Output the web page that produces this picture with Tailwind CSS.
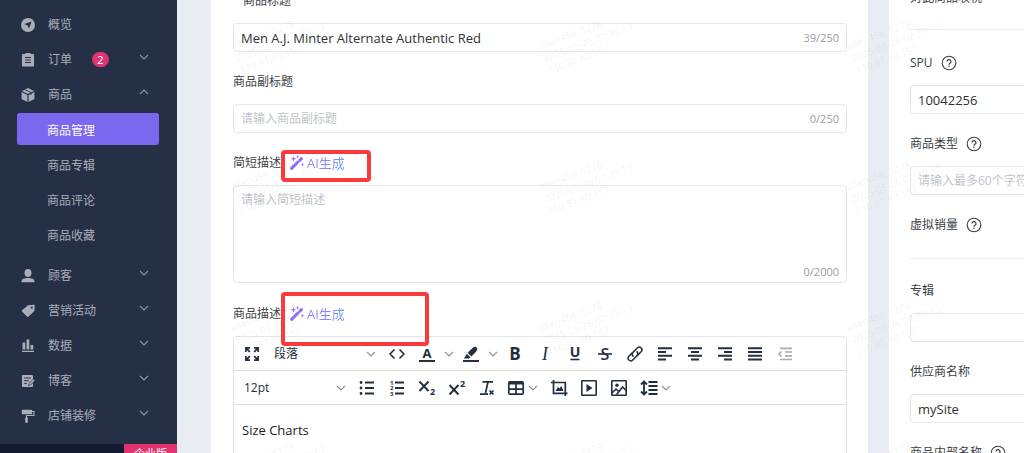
<!DOCTYPE html>
<html lang="zh-CN">
<head>
<meta charset="UTF-8">
<meta name="viewport" content="width=device-width, initial-scale=1.0">
<title>商品管理</title>
<script src="https://cdn.jsdelivr.net/npm/@tailwindcss/browser@4"></script>
</head>
<body class="flex h-screen overflow-hidden bg-[#e9edf3] font-['Open_Sans','Noto_Sans_CJK_SC',sans-serif] text-[12px] leading-5 text-[#3c3f44]">

<!-- icons -->
<svg class="hidden">
  <symbol id="down" viewBox="0 0 10 10"><path d="M1 3l4 4 4-4" fill="none" stroke="currentColor" stroke-width="1.1"/></symbol>
  <symbol id="up" viewBox="0 0 10 10"><path d="M1 7l4-4 4 4" fill="none" stroke="currentColor" stroke-width="1.1"/></symbol>
  <symbol id="help" viewBox="0 0 16 16"><circle cx="8" cy="8" r="6.8" fill="none" stroke="currentColor" stroke-width="1.1"/><path d="M6 6.6a2 2 0 1 1 3 1.7c-.7.4-1 .7-1 1.4" fill="none" stroke="currentColor" stroke-width="1.2"/><circle cx="8" cy="11.3" r=".8" fill="currentColor"/></symbol>
  <symbol id="wand" viewBox="0 0 16 16"><path d="M2.6 13.4L9 7" stroke="#8f6bfa" stroke-width="3" stroke-linecap="round"/><path d="M10.8 5.200l1.600-1.600" stroke="#8f6bfa" stroke-width="3" stroke-linecap="round"/><path d="M4.500.8l.8 2.200 2.200.8-2.200.8-.8 2.200-.8-2.200-2.200-.8 2.200-.8z" fill="#a07bfa"/><path d="M8.600 0l.5 1.200 1.200.5-1.200.5-.5 1.200-.5-1.200-1.200-.5 1.200-.5z" fill="#8f6bfa"/><path d="M13.400 8l.5 1.300 1.300.5-1.300.5-.5 1.300-.5-1.300-1.300-.5 1.300-.5z" fill="#8f6bfa"/></symbol>
</svg>

<!-- sidebar -->
<aside class="flex w-[177px] shrink-0 flex-col overflow-hidden bg-[#253047] text-[#a9aeb8]">
  <nav class="flex-1 overflow-hidden pt-[7px]">
    <a href="#" class="flex h-[35px] items-center pl-[21px] pr-7">
      <svg class="size-[14px]" viewBox="0 0 14 14"><circle cx="7" cy="7" r="7" fill="currentColor"/><path d="M10.600 3.400L8 10.600 6.600 7.400 3.400 6z" fill="#253047"/></svg>
      <span class="ml-[13px]">概览</span>
    </a>
    <a href="#" class="flex h-[35px] items-center pl-[21px] pr-7">
      <svg class="size-[14px]" viewBox="0 0 14 14"><path d="M2 1h2.500V0h5v1H12a1 1 0 0 1 1 1v10.500a1 1 0 0 1-1 1H2a1 1 0 0 1-1-1V2a1 1 0 0 1 1-1z" fill="currentColor"/><path d="M4 4.500h6M4 7h6M4 9.500h6" stroke="#253047"/></svg>
      <span class="ml-[13px]">订单</span>
      <span class="ml-5 flex h-[15px] w-[17px] items-center justify-center rounded-full bg-[#e0336f] text-[11px] leading-none text-white">2</span>
      <svg class="mb-1.5 ml-auto size-[10px] text-[#8f96a3]"><use href="#down"/></svg>
    </a>
    <a href="#" class="flex h-[35px] items-center pl-[21px] pr-7">
      <svg class="size-[14px]" viewBox="0 0 14 14"><path d="M7 0l6 3-6 3-6-3zM.6 4l5.800 2.900V14L.6 11zM13.400 4L7.600 6.900V14l5.800-3z" fill="currentColor"/><path d="M3.800 1.500l6.200 3V7" fill="none" stroke="#253047" stroke-width=".9"/></svg>
      <span class="ml-[13px]">商品</span>
      <svg class="mb-1.5 ml-auto size-[10px] text-[#8f96a3]"><use href="#up"/></svg>
    </a>
    <div class="flex flex-col gap-[3px] px-[17px] pb-2 pt-px">
      <a href="#" class="mr-px h-8 rounded-[3px] bg-[#7b68ee] pl-[30px] pt-2 text-white">商品管理</a>
      <a href="#" class="h-8 pl-[30px] pt-2">商品专辑</a>
      <a href="#" class="h-8 pl-[30px] pt-2">商品评论</a>
      <a href="#" class="h-8 pl-[30px] pt-2">商品收藏</a>
    </div>
    <a href="#" class="flex h-[35px] items-center pl-[21px] pr-7">
      <svg class="size-[14px]" viewBox="0 0 14 14"><ellipse cx="7" cy="4" rx="3.500" ry="4" fill="currentColor"/><path d="M.5 12.500C.5 10 3 9 7 9s6.500 1 6.500 3.500q0 .8-.8.8H1.300q-.8 0-.8-.8z" fill="currentColor"/></svg>
      <span class="ml-[13px]">顾客</span>
      <svg class="mb-1.5 ml-auto size-[10px] text-[#8f96a3]"><use href="#down"/></svg>
    </a>
    <a href="#" class="flex h-[35px] items-center pl-[21px] pr-7">
      <svg class="size-[14px]" viewBox="0 0 14 14"><path d="M7 1.200L13 .8q.8 0 .8.8L13.400 7 7.600 12.600q-.8.8-1.600 0L1 7.600q-.8-.8 0-1.400z" fill="currentColor"/><circle cx="10.800" cy="3.600" r="1.100" fill="#253047"/></svg>
      <span class="ml-[13px]">营销活动</span>
      <svg class="mb-1.5 ml-auto size-[10px] text-[#8f96a3]"><use href="#down"/></svg>
    </a>
    <a href="#" class="flex h-[35px] items-center pl-[21px] pr-7">
      <svg class="size-[14px]" viewBox="0 0 14 14"><path d="M1.500 3.500h2.800v7H1.500zM5.500.5h2.800v10H5.500zM9.500 6h2.800v4.500H9.500zM1 11.700h12V13H1z" fill="currentColor"/></svg>
      <span class="ml-[13px]">数据</span>
      <svg class="mb-1.5 ml-auto size-[10px] text-[#8f96a3]"><use href="#down"/></svg>
    </a>
    <a href="#" class="flex h-[35px] items-center pl-[21px] pr-7">
      <svg class="size-[14px]" viewBox="0 0 14 14"><path d="M2 1h9a1 1 0 0 1 1 1v10a1 1 0 0 1-1 1H2a1 1 0 0 1-1-1V2a1 1 0 0 1 1-1z" fill="currentColor"/><path d="M3.200 4h6.600M3.200 6.700h4.600M3.200 9.400h2.600" stroke="#253047"/><path d="M7.500 11.500l.4-2L12.500 5l1.500 1.500-4.500 4.600z" fill="currentColor" stroke="#253047" stroke-width=".7"/></svg>
      <span class="ml-[13px]">博客</span>
      <svg class="mb-1.5 ml-auto size-[10px] text-[#8f96a3]"><use href="#down"/></svg>
    </a>
    <a href="#" class="flex h-[35px] items-center pl-[21px] pr-7">
      <svg class="size-[14px]" viewBox="0 0 14 14"><path d="M1.500.8h9a.7.7 0 0 1 .7.7v3a.7.7 0 0 1-.7.7h-9a.7.7 0 0 1-.7-.7v-3a.7.7 0 0 1 .7-.7zM4.200 8.500h2.600v4.200a1.300 1.300 0 0 1-2.600 0z" fill="currentColor"/><path d="M11 2.500h2v4H5.500v2.500" fill="none" stroke="currentColor" stroke-width="1.100"/></svg>
      <span class="ml-[13px]">店铺装修</span>
      <svg class="mb-1.5 ml-auto size-[10px] text-[#8f96a3]"><use href="#down"/></svg>
    </a>
  </nav>
  <div class="flex h-[9px] shrink-0 justify-end bg-[#141b30]">
    <span class="w-[53px] bg-[#e0336f] text-center text-[11px] leading-5 text-white">企业版</span>
  </div>
</aside>

<!-- product form -->
<main class="ml-[34px] flex-1 bg-white px-[22px] pr-[21px]">
  <form class="-mt-[9px] flex flex-col gap-5">
    <div class="flex flex-col gap-3">
      <label for="title" class="pl-[10px]">商品标题</label>
      <div class="flex h-[29px] items-center rounded-[4px] border border-[#e4e6ef] px-[7px]">
        <input id="title" type="text" value="Men A.J. Minter Alternate Authentic Red" class="min-w-0 flex-1 text-[13px] text-[#303133] outline-none">
        <span class="text-[11px] text-[#9a9da3]">39/250</span>
      </div>
    </div>
    <div class="flex flex-col gap-3">
      <label for="subtitle">商品副标题</label>
      <div class="flex h-[29px] items-center rounded-[4px] border border-[#e4e6ef] px-[7px]">
        <input id="subtitle" type="text" placeholder="请输入商品副标题" class="min-w-0 flex-1 outline-none placeholder:text-[#c0c4cc]">
        <span class="text-[11px] text-[#9a9da3]">0/250</span>
      </div>
    </div>
    <div class="flex flex-col gap-3">
      <div class="relative flex h-5 items-center">
        <label for="brief">简短描述</label>
        <button type="button" class="ml-2 flex items-center gap-0.5"><svg class="size-4"><use href="#wand"/></svg><span class="bg-linear-to-r from-[#9a7bfa] to-[#6a9bfa] bg-clip-text text-[13px] text-transparent">AI生成</span></button>
        <span class="absolute -top-[3px] left-[48px] h-[32px] w-[90px] rounded-[4px] border-4 border-[#fb3b3b]"></span>
      </div>
      <div class="flex h-[98px] flex-col rounded-[4px] border border-[#e4e6ef] px-[7px] pt-1">
        <textarea id="brief" placeholder="请输入简短描述" class="flex-1 resize-none outline-none placeholder:text-[#c0c4cc]"></textarea>
        <span class="self-end text-[11px] text-[#9a9da3]">0/2000</span>
      </div>
    </div>
    <div class="flex flex-col gap-3">
      <div class="relative flex h-[21px] items-center">
        <label for="block">商品描述</label>
        <button type="button" class="ml-2 flex items-center gap-0.5"><svg class="size-4"><use href="#wand"/></svg><span class="bg-linear-to-r from-[#9a7bfa] to-[#6a9bfa] bg-clip-text text-[13px] text-transparent">AI生成</span></button>
        <span class="absolute -top-[11px] left-[48px] z-10 h-[54px] w-[148px] rounded-[4px] border-4 border-[#fb3b3b]"></span>
      </div>
      <div class="rounded-t-[4px] border border-[#e4e6ef] text-[#222f3e]">
        <div class="flex h-[34px] items-center border-b border-[#dcdcd8] pl-[3px] font-['Open_Sans']">
          <button type="button" aria-label="全屏" class="flex w-[30px] justify-center"><svg class="size-6" viewBox="0 0 24 24" fill="currentColor"><path d="M5 5h5v1.700H8l2.500 2.500-1.300 1.300L6.700 8v2H5zM19 5v5h-1.700V8l-2.500 2.500-1.300-1.300L16 6.700h-2V5zM5 19v-5h1.700v2l2.500-2.500 1.300 1.300L8 17.300h2V19zM19 19h-5v-1.700h2l-2.500-2.500 1.300-1.300 2.500 2.500v-2H19z"/></svg></button>
          <div class="relative w-[115px]">
            <select id="block" class="w-full appearance-none pl-[7px] font-['Open_Sans','Noto_Sans_CJK_SC',sans-serif] outline-none"><option>段落</option></select>
            <svg class="pointer-events-none absolute right-[6px] top-[5px] size-[10px] text-[#8b929b]"><use href="#down"/></svg>
          </div>
          <button type="button" aria-label="源代码" class="flex w-[30px] justify-center"><svg class="size-6" viewBox="0 0 24 24" fill="none" stroke="currentColor" stroke-width="1.700" stroke-linecap="round" stroke-linejoin="round"><path d="M9 8l-4 4 4 4M15 8l4 4-4 4"/></svg></button>
          <button type="button" aria-label="文字颜色" class="flex w-[30px] justify-center"><svg class="size-6" viewBox="0 0 24 24" fill="currentColor"><text x="12" y="16" text-anchor="middle" font-size="13" font-weight="700">A</text><path d="M4 18h16v2H4z"/></svg></button>
          <button type="button" aria-label="选择文字颜色" class="flex w-[14px] justify-center text-[#8b929b]"><svg class="size-[10px]"><use href="#down"/></svg></button>
          <button type="button" aria-label="背景颜色" class="flex w-[30px] justify-center"><svg class="size-6" viewBox="0 0 24 24" fill="currentColor"><path d="M4 18h16v2H4zM5 16.500l2.800-4.800 3.800 3.800-1.800 1zM8.600 10.800l5-4.800q2.500-2 4-.6t-.4 4l-4.800 5z"/></svg></button>
          <button type="button" aria-label="选择背景颜色" class="flex w-[14px] justify-center text-[#8b929b]"><svg class="size-[10px]"><use href="#down"/></svg></button>
          <button type="button" aria-label="粗体" class="flex w-[30px] justify-center"><svg class="size-6" viewBox="0 0 24 24" fill="currentColor"><text x="12" y="18" text-anchor="middle" font-size="17" font-weight="700">B</text></svg></button>
          <button type="button" aria-label="斜体" class="flex w-[30px] justify-center"><svg class="size-6" viewBox="0 0 24 24" fill="currentColor"><text x="12" y="18" text-anchor="middle" font-size="18" font-style="italic" class="font-['Liberation_Serif']">I</text></svg></button>
          <button type="button" aria-label="下划线" class="flex w-[30px] justify-center"><svg class="size-6" viewBox="0 0 24 24" fill="currentColor"><text x="12" y="15" text-anchor="middle" font-size="14" font-weight="700">U</text><path d="M7.500 16.700h9v1.600h-9z"/></svg></button>
          <button type="button" aria-label="删除线" class="flex w-[30px] justify-center"><svg class="size-6" viewBox="0 0 24 24" fill="currentColor"><text x="12" y="17.500" text-anchor="middle" font-size="16" font-weight="600">S</text><path d="M5 11.200h14v1.600H5z"/></svg></button>
          <button type="button" aria-label="链接" class="flex w-[30px] justify-center"><svg class="size-6" viewBox="0 0 24 24" fill="none" stroke="currentColor" stroke-width="1.500" stroke-linecap="round"><path d="M10 14.300a3 3 0 0 1 .2-4.200l4.300-4.300a2.700 2.700 0 0 1 3.800 3.800l-3 3"/><path d="M14 9.700a3 3 0 0 1-.2 4.200l-4.300 4.300a2.700 2.700 0 0 1-3.800-3.800l3-3"/></svg></button>
          <button type="button" aria-label="左对齐" class="flex w-[30px] justify-center"><svg class="size-6" viewBox="0 0 24 24" fill="none" stroke="currentColor" stroke-width="1.900"><path d="M5 6.300h14M5 10h8M5 13.800h14M5 17.500h8"/></svg></button>
          <button type="button" aria-label="居中" class="flex w-[30px] justify-center"><svg class="size-6" viewBox="0 0 24 24" fill="none" stroke="currentColor" stroke-width="1.900"><path d="M5 6.300h14M8 10h8M5 13.800h14M8 17.500h8"/></svg></button>
          <button type="button" aria-label="右对齐" class="flex w-[30px] justify-center"><svg class="size-6" viewBox="0 0 24 24" fill="none" stroke="currentColor" stroke-width="1.900"><path d="M5 6.300h14M11 10h8M5 13.800h14M11 17.500h8"/></svg></button>
          <button type="button" aria-label="两端对齐" class="flex w-[30px] justify-center"><svg class="size-6" viewBox="0 0 24 24" fill="none" stroke="currentColor" stroke-width="1.900"><path d="M5 6.300h14M5 10h14M5 13.800h14M5 17.500h14"/></svg></button>
          <button type="button" aria-label="减少缩进" disabled class="flex w-[30px] justify-center text-[#a7acb2]"><svg class="size-6" viewBox="0 0 24 24" fill="none" stroke="currentColor" stroke-width="1.700"><path d="M7 6.300h12M12 10h7M12 13.800h7M7 17.500h12M8.500 9.500L6 12l2.500 2.500"/></svg></button>
        </div>
        <div class="flex h-[34px] items-center border-b border-[#dcdcd8] pl-[3px] font-['Open_Sans']">
          <div class="relative w-[115px]">
            <select aria-label="字号" class="w-full appearance-none pl-[7px] outline-none"><option>12pt</option></select>
            <svg class="pointer-events-none absolute right-[6px] top-[5px] size-[10px] text-[#8b929b]"><use href="#down"/></svg>
          </div>
          <button type="button" aria-label="项目符号" class="flex w-[30px] justify-center"><svg class="size-6" viewBox="0 0 24 24" fill="none" stroke="currentColor" stroke-width="1.800"><path d="M10 6.500h9M10 12h9M10 17.500h9"/><path d="M6 6.500h.01M6 12h.01M6 17.500h.01" stroke-width="2.800" stroke-linecap="round"/></svg></button>
          <button type="button" aria-label="编号" class="flex w-[30px] justify-center"><svg class="size-6" viewBox="0 0 24 24" fill="currentColor"><path d="M10 6.500h9M10 12h9M10 17.500h9" stroke="currentColor" stroke-width="1.800"/><text font-size="6" font-weight="700"><tspan x="5" y="8.500">1</tspan><tspan x="5" y="14">2</tspan><tspan x="5" y="19.500">3</tspan></text></svg></button>
          <button type="button" aria-label="下标" class="flex w-[30px] justify-center"><svg class="size-6" viewBox="0 0 24 24" fill="currentColor"><path d="M4.500 5.500l9 9.500M13.500 5.500l-9 9.500" stroke="currentColor" stroke-width="1.900"/><text x="15" y="19" font-size="9" font-weight="700">2</text></svg></button>
          <button type="button" aria-label="上标" class="flex w-[30px] justify-center"><svg class="size-6" viewBox="0 0 24 24" fill="currentColor"><path d="M4.500 9l9 9.500M13.500 9l-9 9.500" stroke="currentColor" stroke-width="1.900"/><text x="15" y="11" font-size="9" font-weight="700">2</text></svg></button>
          <button type="button" aria-label="清除格式" class="flex w-[30px] justify-center"><svg class="size-6" viewBox="0 0 24 24" fill="none" stroke="currentColor" stroke-width="1.700"><path d="M7.500 5.800h10.500M13 6l-2.500 11M5 18.200h8M14.500 14.500l4 4M18.500 14.500l-4 4"/></svg></button>
          <button type="button" aria-label="表格" class="flex w-[42px] items-center pl-0.5"><svg class="size-6" viewBox="0 0 24 24" fill="none" stroke="currentColor" stroke-width="1.700"><rect x="4.800" y="5.800" width="14.400" height="12.400" rx="1.200"/><path d="M5 7h14" stroke-width="3"/><path d="M5 13.200h14M12 8v10"/></svg><svg class="size-[10px] text-[#8b929b]"><use href="#down"/></svg></button>
          <button type="button" aria-label="图片上传" class="flex w-[30px] justify-center"><svg class="size-6" viewBox="0 0 24 24" fill="none" stroke="currentColor" stroke-width="1.700"><path d="M4 6.500h14.300V20M6.500 4v13.300H20.500"/><path d="M8.500 15l2.500-4 1.500 1.500 1.700-2.500 2.300 5z" fill="currentColor" stroke="none"/></svg></button>
          <button type="button" aria-label="视频" class="flex w-[30px] justify-center"><svg class="size-6" viewBox="0 0 24 24" fill="none" stroke="currentColor" stroke-width="1.600"><rect x="4.800" y="4.800" width="14.400" height="14.400" rx=".5"/><path d="M9.500 8v8l6-4z" fill="currentColor" stroke="none"/></svg></button>
          <button type="button" aria-label="图片" class="flex w-[30px] justify-center"><svg class="size-6" viewBox="0 0 24 24" fill="none" stroke="currentColor" stroke-width="1.600"><rect x="4.800" y="4.800" width="14.400" height="14.400" rx=".5"/><path d="M5 17l4-4 3 2.500 3.500-4.500 3.500 3.500M9.500 18.500l3-3.500"/><circle cx="10" cy="9.300" r="1.700" fill="currentColor" stroke="none"/></svg></button>
          <button type="button" aria-label="行高" class="flex w-[42px] items-center pl-[3px]"><svg class="size-6" viewBox="0 0 24 24" fill="none" stroke="currentColor" stroke-width="1.800"><path d="M11.500 6h9M11.500 10h9M11.500 14h9M11.500 18h9M7 6v12M4 8.500l3-3 3 3M4 15.500l3 3 3-3"/></svg><svg class="size-[10px] text-[#8b929b]"><use href="#down"/></svg></button>
        </div>
        <div class="min-h-40 px-2 pt-[15px] text-[13px] text-[#1b1b1b]"><p>Size Charts</p></div>
      </div>
    </div>
  </form>
</main>

<!-- side panel -->
<section class="ml-[21px] w-[135px] shrink-0 overflow-hidden bg-white pl-[21px]">
  <form class="-mt-[12px] w-[260px]">
    <p>对此商品收税</p>
    <hr class="mt-[21px] border-[#ebedf2]">
    <div class="mt-[23px] flex flex-col gap-5">
      <div class="flex flex-col gap-3">
        <label for="spu" class="flex items-center gap-2">SPU <svg class="size-4"><use href="#help"/></svg></label>
        <input id="spu" type="text" value="10042256" class="h-[29px] rounded-[4px] border border-[#e4e6ef] px-[7px] text-[13px] text-[#303133] outline-none">
      </div>
      <div class="flex flex-col gap-3">
        <label for="type" class="flex items-center gap-2">商品类型 <svg class="size-4"><use href="#help"/></svg></label>
        <input id="type" type="text" placeholder="请输入最多60个字符" class="h-[29px] rounded-[4px] border border-[#e4e6ef] px-[7px] outline-none placeholder:text-[#c0c4cc]">
      </div>
      <p class="flex items-center gap-2">虚拟销量 <svg class="size-4"><use href="#help"/></svg></p>
    </div>
    <hr class="mt-[23px] border-[#ebedf2]">
    <div class="mt-[22px] flex flex-col gap-5">
      <div class="flex flex-col gap-3">
        <label for="album">专辑</label>
        <input id="album" type="text" class="h-[29px] rounded-[4px] border border-[#e4e6ef] px-[7px] outline-none">
      </div>
      <div class="flex flex-col gap-3">
        <label for="vendor">供应商名称</label>
        <input id="vendor" type="text" value="mySite" class="h-[29px] rounded-[4px] border border-[#e4e6ef] px-[7px] text-[13px] text-[#303133] outline-none">
      </div>
      <p class="flex items-center gap-2">商品内部名称 <svg class="size-4"><use href="#help"/></svg></p>
    </div>
  </form>
</section>

<!-- watermark -->
<div class="pointer-events-none absolute inset-0 overflow-hidden pl-[229px] pt-[40px] text-[10px] leading-[13px] text-[#6b7280]/10">
  <div class="grid w-[924px] auto-rows-[141px] grid-cols-3">
    <p class="origin-top-left -rotate-20 whitespace-pre">allen456_5278
2025-05-26 07:39:13
110.81.80.157</p>
    <p class="origin-top-left -rotate-20 whitespace-pre">allen456_5278
2025-05-26 07:39:13
110.81.80.157</p>
    <p class="origin-top-left -rotate-20 whitespace-pre">allen456_5278
2025-05-26 07:39:13
110.81.80.157</p>
    <p class="origin-top-left -rotate-20 whitespace-pre">allen456_5278
2025-05-26 07:39:13
110.81.80.157</p>
    <p class="origin-top-left -rotate-20 whitespace-pre">allen456_5278
2025-05-26 07:39:13
110.81.80.157</p>
    <p class="origin-top-left -rotate-20 whitespace-pre">allen456_5278
2025-05-26 07:39:13
110.81.80.157</p>
    <p class="origin-top-left -rotate-20 whitespace-pre">allen456_5278
2025-05-26 07:39:13
110.81.80.157</p>
    <p class="origin-top-left -rotate-20 whitespace-pre">allen456_5278
2025-05-26 07:39:13
110.81.80.157</p>
    <p class="origin-top-left -rotate-20 whitespace-pre">allen456_5278
2025-05-26 07:39:13
110.81.80.157</p>
    <p class="origin-top-left -rotate-20 whitespace-pre">allen456_5278
2025-05-26 07:39:13
110.81.80.157</p>
    <p class="origin-top-left -rotate-20 whitespace-pre">allen456_5278
2025-05-26 07:39:13
110.81.80.157</p>
    <p class="origin-top-left -rotate-20 whitespace-pre">allen456_5278
2025-05-26 07:39:13
110.81.80.157</p>
  </div>
</div>
</body>
</html>
